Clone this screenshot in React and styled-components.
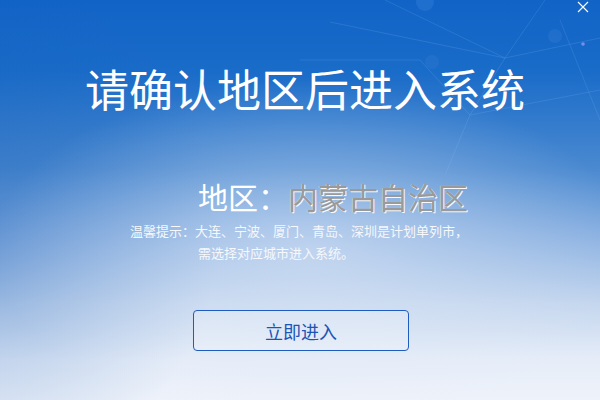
import React from 'react';
import styled, { createGlobalStyle } from 'styled-components';

const GlobalStyle = createGlobalStyle`
  html, body {
    margin: 0;
    padding: 0;
    overflow: hidden;
  }
  body {
    font-family: "Noto Sans CJK SC", "Noto Sans", sans-serif;
  }
`;

const Screen = styled.div`
  position: relative;
  width: 600px;
  height: 400px;
  overflow: hidden;
  display: flex;
  flex-direction: column;
  background:
    radial-gradient(ellipse 320px 170px at 310px 250px, rgba(225, 234, 248, 0.55), rgba(225, 234, 248, 0) 100%),
    radial-gradient(ellipse 260px 260px at -40px 230px, rgba(20, 90, 180, 0.35), rgba(20, 90, 180, 0) 100%),
    linear-gradient(180deg, #1163c6 0%, #1a6cc9 18%, #4a89d0 42%, #86aee0 58%, #c4d6ee 76%, #e6edf8 90%, #eef2fa 100%);
`;

const Decor = styled.svg`
  position: absolute;
  top: 0;
  left: 0;
  pointer-events: none;
`;

const Close = styled.button`
  position: absolute;
  top: 0;
  right: 10px;
  width: 14px;
  height: 14px;
  padding: 0;
  border: none;
  background: none;
  cursor: pointer;
  display: flex;
  align-items: center;
  justify-content: center;
`;

const Title = styled.h1`
  margin: 58px 0 0;
  padding-left: 10px;
  text-align: center;
  font-size: 44px;
  line-height: 60px;
  font-weight: 400;
  color: #ffffff;
`;

const RegionRow = styled.div`
  margin: 58px 0 0 198px;
  display: flex;
  align-items: baseline;
  font-size: 30px;
  line-height: 40px;
`;

const RegionLabel = styled.span`
  color: #ffffff;
`;

const RegionName = styled.span`
  color: #9a9a9a;
  text-shadow: 1px 1px 0 rgba(255, 255, 255, 0.95), -1px 0 0 rgba(255, 255, 255, 0.35);
`;

const Hint = styled.div`
  margin: 4px 0 0 130px;
  font-size: 13px;
  line-height: 22px;
  color: #f6f8fc;
`;

const HintLine = styled.div`
  padding-left: ${p => p.indent || 0}px;
  white-space: nowrap;
`;

const EnterButton = styled.button`
  margin: 46px 0 0 193px;
  width: 216px;
  height: 41px;
  border: 1.5px solid #1f5cbf;
  border-radius: 4px;
  background: rgba(255, 255, 255, 0.22);
  color: #1b55b6;
  font-family: "Noto Sans CJK SC", sans-serif;
  font-size: 18px;
  cursor: pointer;
`;

const lines = [
  [330, 22, 505, 58],
  [505, 58, 600, 38],
  [385, 0, 505, 58],
  [505, 58, 470, 115],
  [470, 115, 600, 90],
  [420, 60, 470, 115],
  [470, 115, 445, 175],
  [545, 0, 505, 58],
  [560, 20, 600, 120],
  [300, 60, 420, 60],
];

const App = () => {
  return (
    <>
      <GlobalStyle />
      <Screen>
        <Decor width="600" height="400" viewBox="0 0 600 400">
          {lines.map(([x1, y1, x2, y2], i) => (
            <line key={i} x1={x1} y1={y1} x2={x2} y2={y2} stroke="#8cc4ff" strokeOpacity="0.16" strokeWidth="1" />
          ))}
          <circle cx="425" cy="2" r="9" fill="#6fb6ff" fillOpacity="0.14" />
          <circle cx="555" cy="36" r="7" fill="#9cc8ff" fillOpacity="0.08" />
          <circle cx="432" cy="62" r="7" fill="#9cc8ff" fillOpacity="0.06" />
          <circle cx="583" cy="44" r="1.8" fill="#b9a8ff" fillOpacity="0.6" />
        </Decor>
        <Close aria-label="关闭">
          <svg width="12" height="12" viewBox="0 0 12 12">
            <path d="M1 1 L11 11 M11 1 L1 11" stroke="#ffffff" strokeWidth="1.1" />
          </svg>
        </Close>
        <Title>请确认地区后进入系统</Title>
        <RegionRow>
          <RegionLabel>地区：</RegionLabel>
          <RegionName>内蒙古自治区</RegionName>
        </RegionRow>
        <Hint>
          <HintLine>温馨提示：大连、宁波、厦门、青岛、深圳是计划单列市，</HintLine>
          <HintLine indent={68}>需选择对应城市进入系统。</HintLine>
        </Hint>
        <EnterButton>立即进入</EnterButton>
      </Screen>
    </>
  );
};

export default App;
